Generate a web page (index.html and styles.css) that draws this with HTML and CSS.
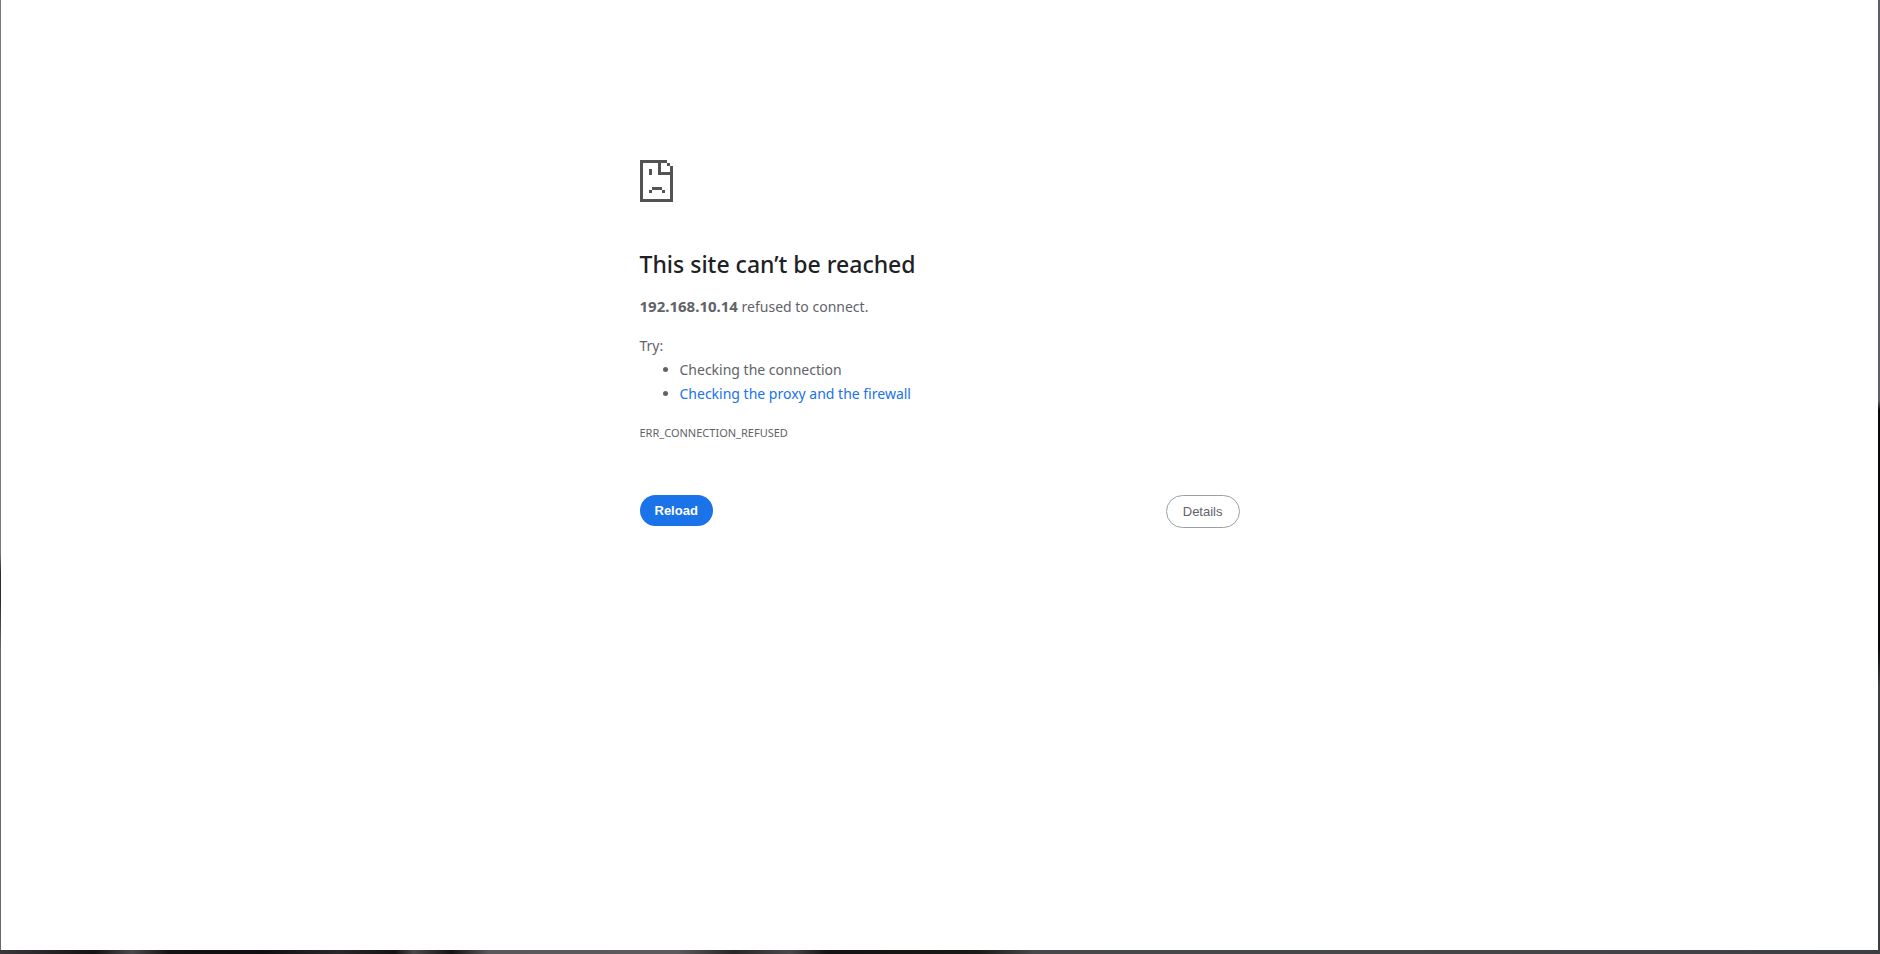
FILE: index.html
```html
<!DOCTYPE html>
<html lang="en">
<head>
<meta charset="utf-8">
<title>192.168.10.14</title>
<link rel="stylesheet" href="styles.css">
</head>
<body>
<div class="page">
  <main class="error">
    <svg class="error-icon" viewBox="0 0 33 42" shape-rendering="crispEdges" aria-hidden="true">
      <path fill="#535353" fill-rule="evenodd" d="M0 0H27V3H30V6H33V42H0ZM3 3V39H30V15H18V3ZM21 3V12H30V6H27V3ZM9 9H12V15H9ZM12 27H22V30H12ZM9 30H12V33H9ZM22 30H25V33H22Z"/>
    </svg>
    <h1 class="title">This site can’t be reached</h1>
    <p class="summary"><strong class="host">192.168.10.14</strong> refused to connect.</p>
    <div class="suggestions">
      <p class="try">Try:</p>
      <ul class="list">
        <li>Checking the connection</li>
        <li><a class="link" href="#">Checking the proxy and the firewall</a></li>
      </ul>
    </div>
    <div class="code">ERR_CONNECTION_REFUSED</div>
    <div class="buttons">
      <button class="button primary" type="button">Reload</button>
      <button class="button secondary" type="button">Details</button>
    </div>
  </main>
</div>
</body>
</html>
```
FILE: styles.css
```css
* { box-sizing: border-box; }
body {
  margin: 0;
  min-height: 100vh;
  display: flex;
  flex-direction: column;
  padding: 0 2px 4px 1px;
  background:
    linear-gradient(90deg, #3a383c, #141212 5%, #4a484c 7%, #141212 9%, #100e10 14%, #2a282a 18%, #151313 21%, #4a484a 22%, #151313 24%, #5a585a 26%, #5c5a5c 36%, #2a2628 39%, #4a484a 42%, #141212 44%, #1a1a18 52%, #48484b 55%, #45484b 75%, #3c3e43) bottom / 100% 4px no-repeat,
    linear-gradient(#77797c 0 58%, #2c2c2c 60% 63%, #66696b 68%) left / 1px 100% no-repeat,
    linear-gradient(#5c5e66 0 42%, #08080a 43% 68%, #3c3e43 72%) right / 2px 100% no-repeat;
  font-family: "Noto Sans", sans-serif;
  font-size: 14px;
  line-height: 24px;
  color: #5f6368;
}
.page { flex: 1; background: #fff; }
.error { max-width: 600px; margin: 160px auto 0; }
.error-icon { display: block; width: 33px; height: 42px; }
.title {
  margin: 44px 0 12px;
  font-size: 23px;
  line-height: 36px;
  font-weight: 500;
  color: #202124;
}
.summary, .try { margin: 0; }
.host { font-size: 15px; }
.suggestions { margin-top: 15px; }
.list { margin: 0; padding-left: 40px; }
.link { color: #1a73e8; text-decoration: none; }
.code { margin-top: 15px; font-size: 11px; }
.buttons {
  display: flex;
  justify-content: space-between;
  align-items: flex-start;
  margin-top: 50px;
}
.button {
  border: 0;
  border-radius: 20px;
  padding: 8px 15px;
  font-family: "Liberation Sans", Arial, sans-serif;
  font-size: 13px;
  line-height: 15px;
}
.primary { background: #1a73e8; color: #fff; font-weight: 700; }
.secondary { padding: 8px 16px; background: #fff; border: 1px solid #9aa0a6; color: #5f6368; }
```
